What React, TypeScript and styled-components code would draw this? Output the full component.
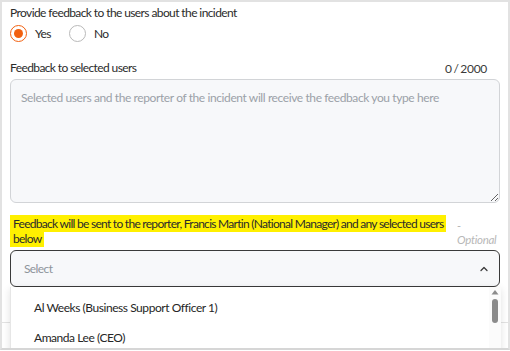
import React from 'react';
import styled, { createGlobalStyle } from 'styled-components';

const GlobalStyle = createGlobalStyle`
  html, body {
    margin: 0;
    padding: 0;
    background: #ffffff;
  }
  body {
    font-family: Lato, "Noto Sans", "Liberation Sans", sans-serif;
    letter-spacing: -0.6px;
    color: #2b2b2b;
  }
  * {
    box-sizing: border-box;
  }
`;

const Frame = styled.div`
  position: relative;
  width: 510px;
  height: 350px;
  border: 2px solid #e2e2e2;
  border-bottom-color: #d6d6d6;
  overflow: hidden;
  background: #ffffff;
`;

const Content = styled.div`
  display: flex;
  flex-direction: column;
  padding: 3px 8px 0 8px;
`;

const Label = styled.div`
  font-size: 12px;
  line-height: 16px;
  color: #2b2b2b;
`;

const RadioRow = styled.div`
  display: flex;
  align-items: center;
  margin-top: 4px;
  height: 16px;
`;

const RadioOption = styled.label`
  display: flex;
  align-items: center;
  gap: 8px;
  font-size: 12px;
  color: #2b2b2b;
  margin-right: 18px;
`;

const RadioCircle = styled.span<{ checked: boolean }>`
  width: 17px;
  height: 17px;
  border-radius: 50%;
  border: 1.5px solid ${p => (p.checked ? '#f2600f' : '#b9b9b9')};
  display: flex;
  align-items: center;
  justify-content: center;
  &::after {
    content: '';
    display: ${p => (p.checked ? 'block' : 'none')};
    width: 9px;
    height: 9px;
    border-radius: 50%;
    background: #f2600f;
  }
`;

const FieldHeader = styled.div`
  display: flex;
  justify-content: space-between;
  align-items: center;
  margin-top: 19px;
  padding-right: 13px;
`;

const Counter = styled.span`
  font-size: 12px;
  letter-spacing: -0.3px;
  word-spacing: -1px;
  color: #3a3a3a;
`;

const TextArea = styled.textarea`
  margin-top: 3px;
  width: 100%;
  height: 124px;
  resize: vertical;
  border: 1px solid #d2d4d7;
  border-radius: 6px;
  background: #f7f8fa;
  padding: 10px 10px;
  font-family: inherit;
  letter-spacing: -0.4px;
  font-size: 12px;
  color: #2b2b2b;
  &::placeholder {
    color: #9ba1a8;
  }
  &:focus {
    outline: none;
  }
`;

const NoteRow = styled.div`
  display: flex;
  margin-top: 14px;
`;

const NoteText = styled.div`
  flex: 1;
  font-size: 12px;
  line-height: 14.5px;
  letter-spacing: -0.72px;
  color: #2b2b2b;
`;

const Highlight = styled.span`
  background: #fff000;
  padding: 1px 3px;
  -webkit-box-decoration-break: clone;
  box-decoration-break: clone;
`;

const Optional = styled.div`
  width: 43px;
  padding-top: 2px;
  font-size: 11.5px;
  line-height: 14px;
  letter-spacing: -0.3px;
  font-style: italic;
  color: #b8b8b8;
`;

const SelectBox = styled.div`
  margin-top: 3px;
  height: 37px;
  border: 1.5px solid #3a3a3a;
  border-radius: 6px;
  background: #f7f8fa;
  display: flex;
  align-items: center;
  justify-content: space-between;
  padding: 0 10px 0 13px;
  font-size: 12px;
  color: #8e949b;
`;

const Divider = styled.div`
  height: 1px;
  background: #e3e3e3;
  margin: 35px -8px 0 -8px;
`;

const Menu = styled.div`
  position: absolute;
  left: 8px;
  right: 7px;
  top: 285px;
  height: 80px;
  background: #ffffff;
  border-left: 1px solid #e6e6e6;
  box-shadow: 0 2px 8px rgba(0, 0, 0, 0.12);
  display: flex;
`;

const MenuList = styled.div`
  flex: 1;
  display: flex;
  flex-direction: column;
  padding-top: 5px;
`;

const MenuItem = styled.div`
  height: 30px;
  display: flex;
  align-items: center;
  padding-left: 23px;
  font-size: 12px;
  letter-spacing: -0.45px;
  color: #262626;
`;

const ScrollTrack = styled.div`
  width: 12px;
  background: #fbfbfb;
  display: flex;
  flex-direction: column;
  align-items: center;
  padding-top: 2px;
  gap: 4px;
`;

const ScrollThumb = styled.div`
  width: 6px;
  height: 24px;
  border-radius: 3px;
  background: #8b8b8b;
`;

const ChevronUp = () => (
  <svg width="10" height="10" viewBox="0 0 10 10">
    <path d="M2 6.5 L5 3.5 L8 6.5" fill="none" stroke="#3a3a3a" strokeWidth="1.3" strokeLinecap="round" strokeLinejoin="round" />
  </svg>
);

const ArrowUp = () => (
  <svg width="8" height="6" viewBox="0 0 8 6">
    <path d="M0.5 5.5 L4 1 L7.5 5.5 Z" fill="#8b8b8b" />
  </svg>
);

const App = () => {
  return (
    <>
      <GlobalStyle />
      <Frame>
        <Content>
          <Label>Provide feedback to the users about the incident</Label>
          <RadioRow>
            <RadioOption>
              <RadioCircle checked />
              Yes
            </RadioOption>
            <RadioOption>
              <RadioCircle checked={false} />
              No
            </RadioOption>
          </RadioRow>
          <FieldHeader>
            <Label>Feedback to selected users</Label>
            <Counter>0 / 2000</Counter>
          </FieldHeader>
          <TextArea placeholder="Selected users and the reporter of the incident will receive the feedback you type here" />
          <NoteRow>
            <NoteText>
              <Highlight>
                Feedback will be sent to the reporter, Francis Martin (National Manager) and any selected users below
              </Highlight>
            </NoteText>
            <Optional>- Optional</Optional>
          </NoteRow>
          <SelectBox>
            <span>Select</span>
            <ChevronUp />
          </SelectBox>
          <Divider />
        </Content>
        <Menu>
          <MenuList>
            <MenuItem>Al Weeks (Business Support Officer 1)</MenuItem>
            <MenuItem>Amanda Lee (CEO)</MenuItem>
          </MenuList>
          <ScrollTrack>
            <ArrowUp />
            <ScrollThumb />
          </ScrollTrack>
        </Menu>
      </Frame>
    </>
  );
};

export default App;
